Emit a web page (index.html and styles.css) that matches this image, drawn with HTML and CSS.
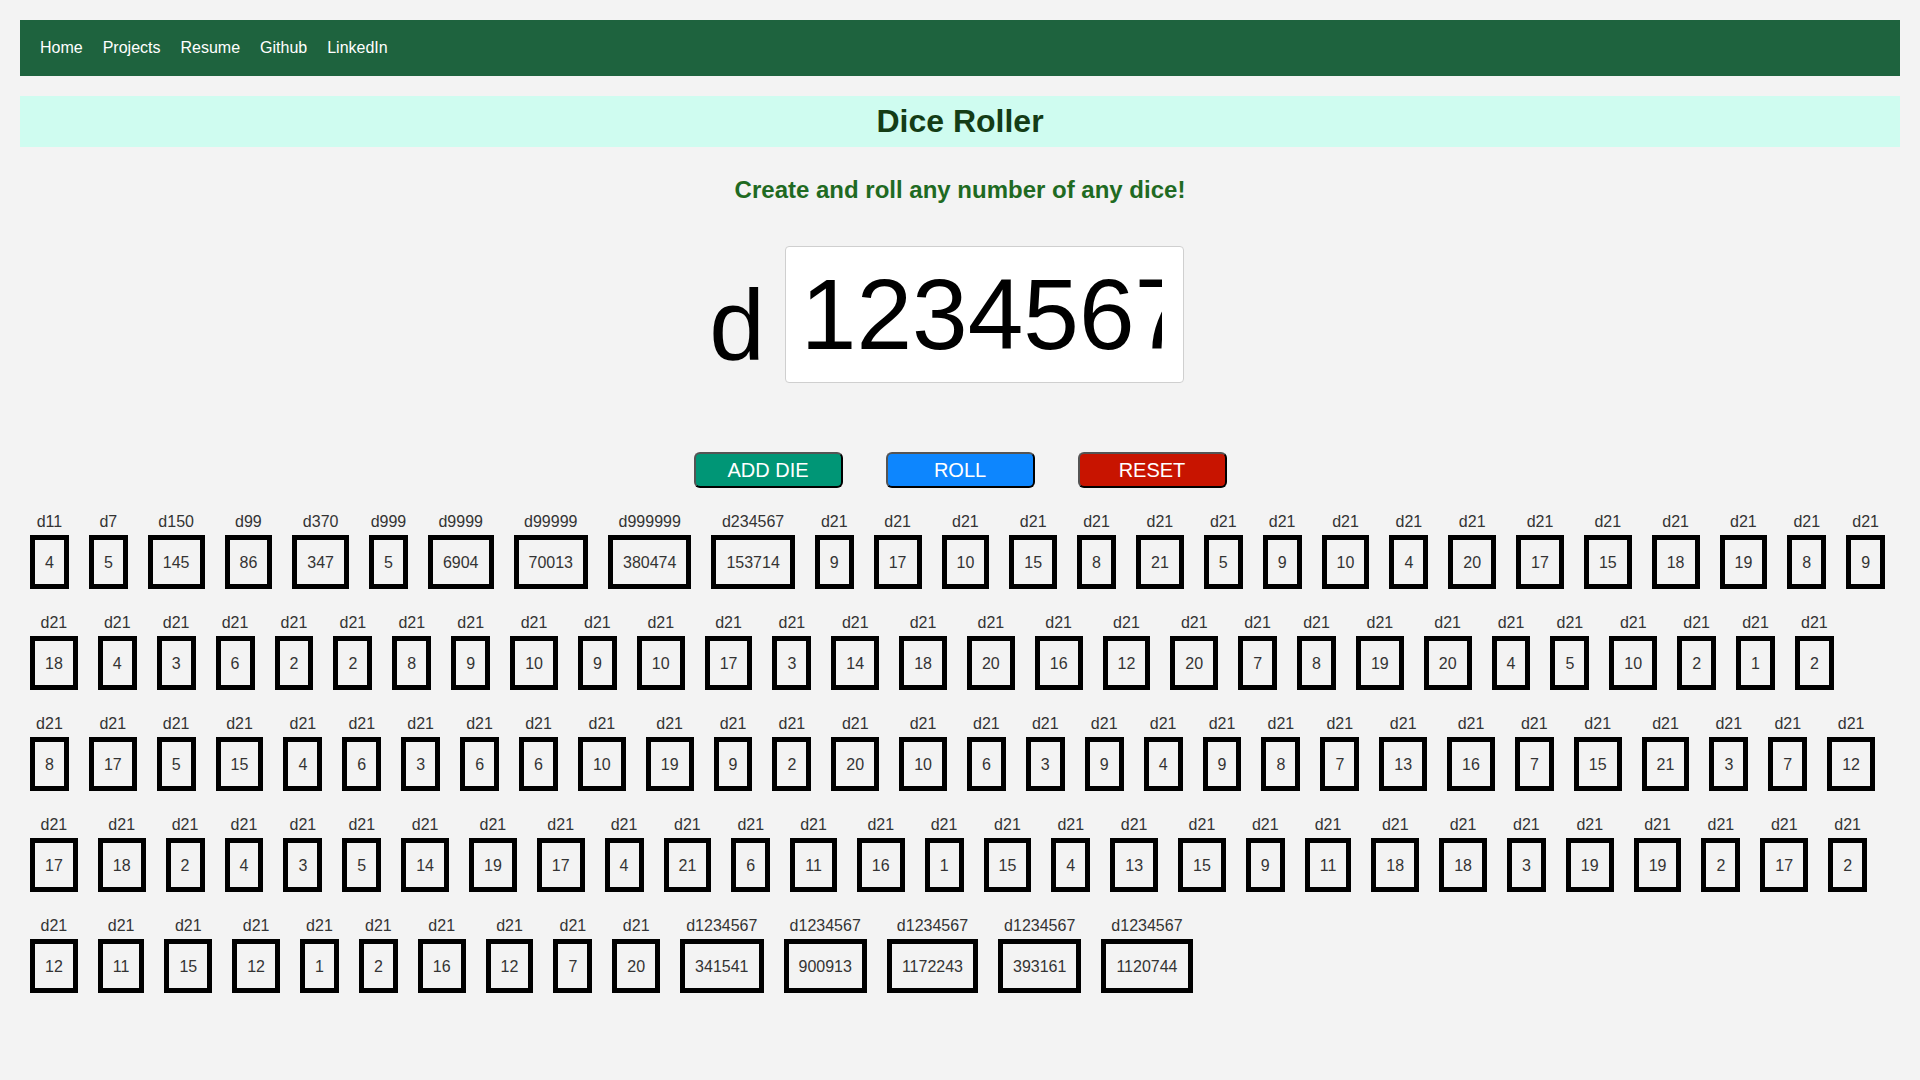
FILE: index.html
```html
<!DOCTYPE html>
<html lang="en">
<head>
<meta charset="utf-8">
<title>Dice Roller</title>
<link rel="stylesheet" href="styles.css">
</head>
<body>
<nav class="topnav">
  <a href="#">Home</a>
  <a href="#">Projects</a>
  <a href="#">Resume</a>
  <a href="#">Github</a>
  <a href="#">LinkedIn</a>
</nav>
<header class="title-bar"><h1>Dice Roller</h1></header>
<h2 class="tagline">Create and roll any number of any dice!</h2>
<div class="die-input">
  <label class="die-prefix" for="sides">d</label>
  <input id="sides" class="sides-input" type="text" value="1234567">
</div>
<div class="controls">
  <button class="btn btn-add">ADD DIE</button>
  <button class="btn btn-roll">ROLL</button>
  <button class="btn btn-reset">RESET</button>
</div>
<div class="dice">
  <div class="die"><span class="die-label">d11</span><span class="die-face">4</span></div>
  <div class="die"><span class="die-label">d7</span><span class="die-face">5</span></div>
  <div class="die"><span class="die-label">d150</span><span class="die-face">145</span></div>
  <div class="die"><span class="die-label">d99</span><span class="die-face">86</span></div>
  <div class="die"><span class="die-label">d370</span><span class="die-face">347</span></div>
  <div class="die"><span class="die-label">d999</span><span class="die-face">5</span></div>
  <div class="die"><span class="die-label">d9999</span><span class="die-face">6904</span></div>
  <div class="die"><span class="die-label">d99999</span><span class="die-face">70013</span></div>
  <div class="die"><span class="die-label">d999999</span><span class="die-face">380474</span></div>
  <div class="die"><span class="die-label">d234567</span><span class="die-face">153714</span></div>
  <div class="die"><span class="die-label">d21</span><span class="die-face">9</span></div>
  <div class="die"><span class="die-label">d21</span><span class="die-face">17</span></div>
  <div class="die"><span class="die-label">d21</span><span class="die-face">10</span></div>
  <div class="die"><span class="die-label">d21</span><span class="die-face">15</span></div>
  <div class="die"><span class="die-label">d21</span><span class="die-face">8</span></div>
  <div class="die"><span class="die-label">d21</span><span class="die-face">21</span></div>
  <div class="die"><span class="die-label">d21</span><span class="die-face">5</span></div>
  <div class="die"><span class="die-label">d21</span><span class="die-face">9</span></div>
  <div class="die"><span class="die-label">d21</span><span class="die-face">10</span></div>
  <div class="die"><span class="die-label">d21</span><span class="die-face">4</span></div>
  <div class="die"><span class="die-label">d21</span><span class="die-face">20</span></div>
  <div class="die"><span class="die-label">d21</span><span class="die-face">17</span></div>
  <div class="die"><span class="die-label">d21</span><span class="die-face">15</span></div>
  <div class="die"><span class="die-label">d21</span><span class="die-face">18</span></div>
  <div class="die"><span class="die-label">d21</span><span class="die-face">19</span></div>
  <div class="die"><span class="die-label">d21</span><span class="die-face">8</span></div>
  <div class="die"><span class="die-label">d21</span><span class="die-face">9</span></div>

  <div class="die"><span class="die-label">d21</span><span class="die-face">18</span></div>
  <div class="die"><span class="die-label">d21</span><span class="die-face">4</span></div>
  <div class="die"><span class="die-label">d21</span><span class="die-face">3</span></div>
  <div class="die"><span class="die-label">d21</span><span class="die-face">6</span></div>
  <div class="die"><span class="die-label">d21</span><span class="die-face">2</span></div>
  <div class="die"><span class="die-label">d21</span><span class="die-face">2</span></div>
  <div class="die"><span class="die-label">d21</span><span class="die-face">8</span></div>
  <div class="die"><span class="die-label">d21</span><span class="die-face">9</span></div>
  <div class="die"><span class="die-label">d21</span><span class="die-face">10</span></div>
  <div class="die"><span class="die-label">d21</span><span class="die-face">9</span></div>
  <div class="die"><span class="die-label">d21</span><span class="die-face">10</span></div>
  <div class="die"><span class="die-label">d21</span><span class="die-face">17</span></div>
  <div class="die"><span class="die-label">d21</span><span class="die-face">3</span></div>
  <div class="die"><span class="die-label">d21</span><span class="die-face">14</span></div>
  <div class="die"><span class="die-label">d21</span><span class="die-face">18</span></div>
  <div class="die"><span class="die-label">d21</span><span class="die-face">20</span></div>
  <div class="die"><span class="die-label">d21</span><span class="die-face">16</span></div>
  <div class="die"><span class="die-label">d21</span><span class="die-face">12</span></div>
  <div class="die"><span class="die-label">d21</span><span class="die-face">20</span></div>
  <div class="die"><span class="die-label">d21</span><span class="die-face">7</span></div>
  <div class="die"><span class="die-label">d21</span><span class="die-face">8</span></div>
  <div class="die"><span class="die-label">d21</span><span class="die-face">19</span></div>
  <div class="die"><span class="die-label">d21</span><span class="die-face">20</span></div>
  <div class="die"><span class="die-label">d21</span><span class="die-face">4</span></div>
  <div class="die"><span class="die-label">d21</span><span class="die-face">5</span></div>
  <div class="die"><span class="die-label">d21</span><span class="die-face">10</span></div>
  <div class="die"><span class="die-label">d21</span><span class="die-face">2</span></div>
  <div class="die"><span class="die-label">d21</span><span class="die-face">1</span></div>
  <div class="die"><span class="die-label">d21</span><span class="die-face">2</span></div>

  <div class="die"><span class="die-label">d21</span><span class="die-face">8</span></div>
  <div class="die"><span class="die-label">d21</span><span class="die-face">17</span></div>
  <div class="die"><span class="die-label">d21</span><span class="die-face">5</span></div>
  <div class="die"><span class="die-label">d21</span><span class="die-face">15</span></div>
  <div class="die"><span class="die-label">d21</span><span class="die-face">4</span></div>
  <div class="die"><span class="die-label">d21</span><span class="die-face">6</span></div>
  <div class="die"><span class="die-label">d21</span><span class="die-face">3</span></div>
  <div class="die"><span class="die-label">d21</span><span class="die-face">6</span></div>
  <div class="die"><span class="die-label">d21</span><span class="die-face">6</span></div>
  <div class="die"><span class="die-label">d21</span><span class="die-face">10</span></div>
  <div class="die"><span class="die-label">d21</span><span class="die-face">19</span></div>
  <div class="die"><span class="die-label">d21</span><span class="die-face">9</span></div>
  <div class="die"><span class="die-label">d21</span><span class="die-face">2</span></div>
  <div class="die"><span class="die-label">d21</span><span class="die-face">20</span></div>
  <div class="die"><span class="die-label">d21</span><span class="die-face">10</span></div>
  <div class="die"><span class="die-label">d21</span><span class="die-face">6</span></div>
  <div class="die"><span class="die-label">d21</span><span class="die-face">3</span></div>
  <div class="die"><span class="die-label">d21</span><span class="die-face">9</span></div>
  <div class="die"><span class="die-label">d21</span><span class="die-face">4</span></div>
  <div class="die"><span class="die-label">d21</span><span class="die-face">9</span></div>
  <div class="die"><span class="die-label">d21</span><span class="die-face">8</span></div>
  <div class="die"><span class="die-label">d21</span><span class="die-face">7</span></div>
  <div class="die"><span class="die-label">d21</span><span class="die-face">13</span></div>
  <div class="die"><span class="die-label">d21</span><span class="die-face">16</span></div>
  <div class="die"><span class="die-label">d21</span><span class="die-face">7</span></div>
  <div class="die"><span class="die-label">d21</span><span class="die-face">15</span></div>
  <div class="die"><span class="die-label">d21</span><span class="die-face">21</span></div>
  <div class="die"><span class="die-label">d21</span><span class="die-face">3</span></div>
  <div class="die"><span class="die-label">d21</span><span class="die-face">7</span></div>
  <div class="die"><span class="die-label">d21</span><span class="die-face">12</span></div>

  <div class="die"><span class="die-label">d21</span><span class="die-face">17</span></div>
  <div class="die"><span class="die-label">d21</span><span class="die-face">18</span></div>
  <div class="die"><span class="die-label">d21</span><span class="die-face">2</span></div>
  <div class="die"><span class="die-label">d21</span><span class="die-face">4</span></div>
  <div class="die"><span class="die-label">d21</span><span class="die-face">3</span></div>
  <div class="die"><span class="die-label">d21</span><span class="die-face">5</span></div>
  <div class="die"><span class="die-label">d21</span><span class="die-face">14</span></div>
  <div class="die"><span class="die-label">d21</span><span class="die-face">19</span></div>
  <div class="die"><span class="die-label">d21</span><span class="die-face">17</span></div>
  <div class="die"><span class="die-label">d21</span><span class="die-face">4</span></div>
  <div class="die"><span class="die-label">d21</span><span class="die-face">21</span></div>
  <div class="die"><span class="die-label">d21</span><span class="die-face">6</span></div>
  <div class="die"><span class="die-label">d21</span><span class="die-face">11</span></div>
  <div class="die"><span class="die-label">d21</span><span class="die-face">16</span></div>
  <div class="die"><span class="die-label">d21</span><span class="die-face">1</span></div>
  <div class="die"><span class="die-label">d21</span><span class="die-face">15</span></div>
  <div class="die"><span class="die-label">d21</span><span class="die-face">4</span></div>
  <div class="die"><span class="die-label">d21</span><span class="die-face">13</span></div>
  <div class="die"><span class="die-label">d21</span><span class="die-face">15</span></div>
  <div class="die"><span class="die-label">d21</span><span class="die-face">9</span></div>
  <div class="die"><span class="die-label">d21</span><span class="die-face">11</span></div>
  <div class="die"><span class="die-label">d21</span><span class="die-face">18</span></div>
  <div class="die"><span class="die-label">d21</span><span class="die-face">18</span></div>
  <div class="die"><span class="die-label">d21</span><span class="die-face">3</span></div>
  <div class="die"><span class="die-label">d21</span><span class="die-face">19</span></div>
  <div class="die"><span class="die-label">d21</span><span class="die-face">19</span></div>
  <div class="die"><span class="die-label">d21</span><span class="die-face">2</span></div>
  <div class="die"><span class="die-label">d21</span><span class="die-face">17</span></div>
  <div class="die"><span class="die-label">d21</span><span class="die-face">2</span></div>

  <div class="die"><span class="die-label">d21</span><span class="die-face">12</span></div>
  <div class="die"><span class="die-label">d21</span><span class="die-face">11</span></div>
  <div class="die"><span class="die-label">d21</span><span class="die-face">15</span></div>
  <div class="die"><span class="die-label">d21</span><span class="die-face">12</span></div>
  <div class="die"><span class="die-label">d21</span><span class="die-face">1</span></div>
  <div class="die"><span class="die-label">d21</span><span class="die-face">2</span></div>
  <div class="die"><span class="die-label">d21</span><span class="die-face">16</span></div>
  <div class="die"><span class="die-label">d21</span><span class="die-face">12</span></div>
  <div class="die"><span class="die-label">d21</span><span class="die-face">7</span></div>
  <div class="die"><span class="die-label">d21</span><span class="die-face">20</span></div>
  <div class="die"><span class="die-label">d1234567</span><span class="die-face">341541</span></div>
  <div class="die"><span class="die-label">d1234567</span><span class="die-face">900913</span></div>
  <div class="die"><span class="die-label">d1234567</span><span class="die-face">1172243</span></div>
  <div class="die"><span class="die-label">d1234567</span><span class="die-face">393161</span></div>
  <div class="die"><span class="die-label">d1234567</span><span class="die-face">1120744</span></div>
</div>
</body>
</html>
```

FILE: styles.css
```css
html {
  background: #f3f3f3;
}

body {
  margin: 20px;
  background: #f3f3f3;
  font-family: "Liberation Sans", Arial, sans-serif;
  font-size: 16px;
  color: #000;
}

.topnav {
  display: flex;
  align-items: center;
  height: 56px;
  padding: 0 10px;
  background: #1e633e;
}

.topnav a {
  padding: 0 10px;
  color: #fff;
  font-size: 16px;
  text-decoration: none;
}

.title-bar {
  margin-top: 20px;
  padding: 7px 0;
  background: #cffcf0;
  text-align: center;
}

.title-bar h1 {
  margin: 0;
  font-size: 32px;
  font-weight: bold;
  color: #143c16;
}

.tagline {
  margin: 29px 0 0;
  font-size: 24px;
  font-weight: bold;
  text-align: center;
  color: #1f6a22;
}

.die-input {
  display: flex;
  justify-content: center;
  align-items: flex-end;
  margin-top: 42px;
  padding-right: 27px;
}

.die-prefix {
  margin-right: 20px;
  font-size: 100px;
  line-height: normal;
  color: #000;
}

.sides-input {
  box-sizing: border-box;
  width: 399px;
  height: 137px;
  padding: 10px 21px 10px 15px;
  border: 1px solid #cfcfcf;
  border-radius: 4px;
  background: #fff;
  font-family: "Liberation Sans", Arial, sans-serif;
  font-size: 100px;
  color: #000;
  outline: none;
}

.controls {
  display: flex;
  justify-content: center;
  gap: 43px;
  margin-top: 69px;
}

.btn {
  box-sizing: border-box;
  width: 149px;
  height: 36px;
  padding: 0;
  border: 2px solid;
  border-color: #545454 #000 #000 #545454;
  border-radius: 6px;
  font-family: "Liberation Sans", Arial, sans-serif;
  font-size: 20px;
  color: #fff;
  cursor: pointer;
}

.btn-add {
  background: #009676;
}

.btn-roll {
  background: #0d86fe;
}

.btn-reset {
  background: #c81400;
}

.dice {
  display: flex;
  flex-wrap: wrap;
  column-gap: 20px;
  row-gap: 25px;
  margin-top: 25px;
  padding: 0 10px;
}

.die {
  display: flex;
  flex-direction: column;
  align-items: center;
}

.die-label {
  margin-bottom: 4px;
  font-size: 16px;
  line-height: 18px;
  color: #333;
}

.die-face {
  padding: 14px 10px 12px;
  border: 5px solid #000;
  font-size: 16px;
  line-height: 18px;
  color: #333;
}
```
